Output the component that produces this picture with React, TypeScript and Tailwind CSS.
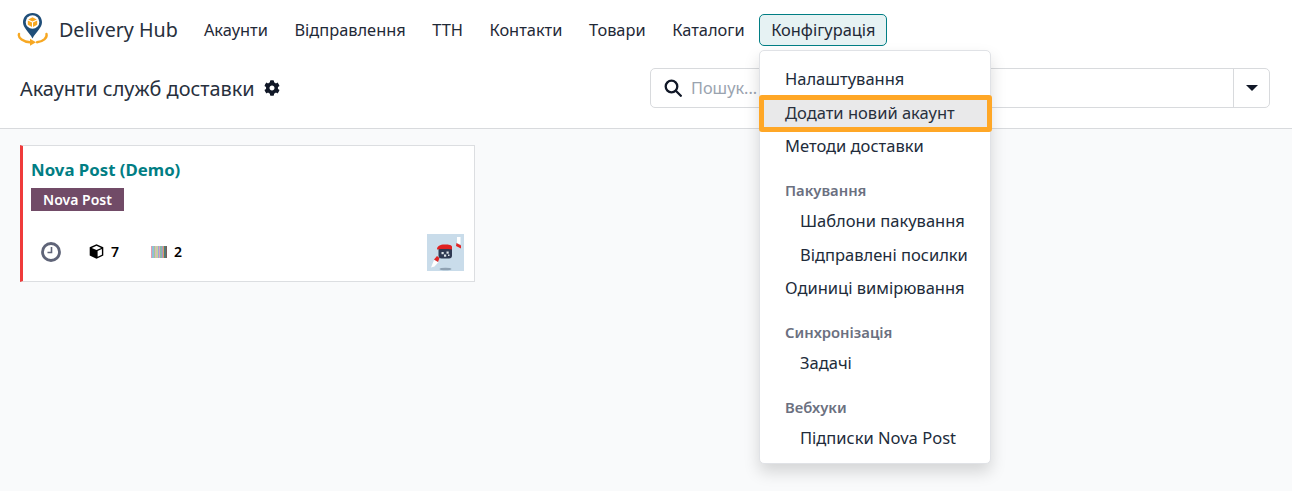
import React from 'react';
import { FaCog } from 'react-icons/fa';

const font = { fontFamily: '"Noto Sans", "Open Sans", sans-serif' };

const navItems = ['Акаунти', 'Відправлення', 'ТТН', 'Контакти', 'Товари', 'Каталоги'];

const Logo = () => (
  <svg width="32" height="36" viewBox="0 0 32 36" className="shrink-0">
    <path d="M15.500 1C9.800 1 6 5.200 6 10.300 6 15.800 12 20 15.500 26.500 19 20 25 15.800 25 10.300 25 5.200 21.200 1 15.500 1Z" fill="#1f4e79" />
    <circle cx="15.500" cy="10" r="6.800" fill="#fff" />
    <path d="M15.500 5.200l4.300 2.200-4.300 2.200-4.300-2.200Z" fill="#f7a823" />
    <path d="M10.800 8.400l4.200 2.100v4.500l-4.200-2.200Z" fill="#f7a823" />
    <path d="M20.200 8.400L16 10.500v4.500l4.200-2.200Z" fill="#f7a823" />
    <path d="M2 22c-1.200 4 4.500 7.800 11 8.200" fill="none" stroke="#f7a823" strokeWidth="2.400" strokeLinecap="round" />
    <path d="M29.500 22c1 4-3.500 7.600-9.500 8.200" fill="none" stroke="#f7a823" strokeWidth="2.400" strokeLinecap="round" />
    <path d="M13 26.700l6 3.500-6 3.500Z" fill="#f7a823" />
  </svg>
);

const Thumb = () => (
  <svg width="37" height="37" viewBox="0 0 37 37" className="block">
    <rect width="37" height="37" fill="#c9dcea" />
    <ellipse cx="18.500" cy="35" rx="6" ry="1.300" fill="#8fa2b3" />
    <path d="M7 26l4.500 2-4 4.500-3.500 1Z" fill="#fff" />
    <path d="M7 25.500l3-3.500 2.500 2-1.500 4Z" fill="#e02525" />
    <path d="M30 3h3.500v7l-3.500-.5Z" fill="#fff" />
    <path d="M29.500 9l4.500 2.500v3L29 12Z" fill="#e02525" />
    <rect x="11.500" y="12" width="13.500" height="12.500" rx="3" fill="#2f3a52" />
    <path d="M10 15.500c0-3.500 3-5 7.500-5s7.500.5 7.500 2.500v2.500c-5-.7-10-.5-15 0Z" fill="#e02020" />
    <rect x="14.500" y="18" width="2.200" height="2.200" fill="#dfe5ea" />
    <rect x="19.500" y="17.500" width="2.200" height="2.200" fill="#dfe5ea" />
    <rect x="17" y="20.500" width="2.200" height="2.200" fill="#dfe5ea" />
    <rect x="21" y="20.500" width="1.500" height="1.500" fill="#dfe5ea" />
  </svg>
);

const Cube = () => (
  <svg width="15" height="15" viewBox="0 0 15 15">
    <path d="M7.500.3l6.800 3v8.300l-6.800 3.200L.7 11.600V3.300Z" fill="#000" />
    <path d="M7.500 1.800l4.700 2.100-4.700 2-4.700-2Z" fill="#fff" />
    <path d="M8.600 7l4.300-1.900v5.600l-4.300 2.100Z" fill="#fff" />
  </svg>
);

const Barcode = () => {
  const colors = ['#e39ab0', '#8fc0d8', '#a9c88e', '#d8b0c8', '#c7d0a0', '#9aa8d8', '#e0a8b0', '#88b8a8', '#b090c8', '#d8a060', '#4f7a78', '#7a5a58'];
  return (
    <div className="flex h-3 w-4">
      {colors.map((c, i) => (
        <span key={i} className="h-full flex-1" style={{ backgroundColor: c }} />
      ))}
    </div>
  );
};

const MenuItem = ({ label, indent }: { label: string; indent?: boolean }) => (
  <div className={`h-[33.500px] leading-[33.500px] text-[16.500px] text-[#212b3a] whitespace-nowrap ${indent ? 'pl-10' : 'pl-[25px]'}`}>{label}</div>
);

const MenuHeader = ({ label }: { label: string }) => (
  <div className="mt-[11.300px] h-[30px] pl-[25px] pt-[4px] text-[14.800px] leading-[24px] font-semibold text-[#6b7080]">{label}</div>
);

export default function App() {
  return (
    <div className="relative h-[491px] w-[1292px] overflow-hidden bg-[#f9fafb] text-[#1f2937]" style={font}>
      <header className="h-[129px] border-b border-[#d8dadd] bg-white">
        <nav className="flex h-[60px] items-center pl-[17px]">
          <Logo />
          <span className="ml-[10px] mr-[14px] text-[19.700px] text-[#28303d]">Delivery Hub</span>
          <div className="flex items-center gap-[2.500px]">
            {navItems.map((item) => (
              <span key={item} className="px-3 py-1 text-[16.400px] text-[#1f2937]">{item}</span>
            ))}
            <span className="rounded-[5px] border border-[#017e84] bg-[#e6f2f3] px-[11px] py-[3px] text-[16.400px] text-[#1f2937]">Конфігурація</span>
          </div>
        </nav>
        <div className="flex h-[40px] items-center justify-between pl-5 pr-[22px] mt-[8px]">
          <div className="flex items-center gap-[9px]">
            <span className="pt-[2px] text-[19.900px] text-[#28303d]">Акаунти служб доставки</span>
            <FaCog size={16} color="#111827" />
          </div>
          <div className="flex h-[40px] w-[620px] rounded-[5px] border border-[#d8dadd] bg-white">
            <div className="flex flex-1 items-center gap-[9px] pl-[13px]">
              <svg width="18" height="18" viewBox="0 0 18 18" fill="none" stroke="#111827" strokeWidth="2.300">
                <circle cx="7.500" cy="7.500" r="5.800" />
                <path d="M11.800 11.800l5 5" strokeLinecap="round" />
              </svg>
              <span className="text-[16.300px] text-[#9aa3af]">Пошук...</span>
            </div>
            <div className="flex w-[36px] items-center justify-center border-l border-[#d8dadd]">
              <span className="h-0 w-0 border-x-[6px] border-t-[6px] border-x-transparent border-t-[#111827]" />
            </div>
          </div>
        </div>
      </header>

      <main className="p-4 pl-5">
        <div className="flex h-[137px] w-[455px] flex-col border border-[#dcdee1] border-l-[3px] border-l-[#ef3b3b] bg-white pl-2 pr-[10px]">
          <div className="mt-[10px] text-[16.800px] leading-[28px] font-bold text-[#017e84]">Nova Post (Demo)</div>
          <div className="mt-[4px] h-[23px] w-[93px] bg-[#714b67] text-center text-[14px] leading-[23px] font-semibold text-white">Nova Post</div>
          <div className="mt-auto mb-[10px] flex items-end justify-between">
            <div className="mb-[9px] flex items-center pl-[10px] text-[14px] font-semibold text-black">
              <svg width="20" height="20" viewBox="0 0 20 20" fill="none">
                <circle cx="10" cy="10" r="8.500" stroke="#5f6478" strokeWidth="2.800" />
                <path d="M10.500 5v5.500H6.500" stroke="#5f6478" strokeWidth="1.600" />
              </svg>
              <span className="ml-[28px]"><Cube /></span>
              <span className="ml-[7px]">7</span>
              <span className="ml-[32px]"><Barcode /></span>
              <span className="ml-[7px]">2</span>
            </div>
            <Thumb />
          </div>
        </div>
      </main>

      {/* dropdown */}
      <div className="absolute left-[759px] top-[50px] h-[414px] w-[232px] rounded-[5px] border border-[#e0e2e6] bg-white pt-[11px] shadow-[0_8px_16px_rgba(0,0,0,0.15)]">
        <MenuItem label="Налаштування" />
        <div className="mx-[-1px] mt-[-0.500px] mb-[-2.750px] h-[37px] w-[233px] rounded-[3px] border-[5px] border-[#ffa726] bg-[#e9e9ea] pl-[21px] text-[16.500px] leading-[25px] text-[#28303d] whitespace-nowrap">Додати новий акаунт</div>
        <MenuItem label="Методи доставки" />
        <MenuHeader label="Пакування" />
        <MenuItem label="Шаблони пакування" indent />
        <MenuItem label="Відправлені посилки" indent />
        <MenuItem label="Одиниці вимірювання" />
        <MenuHeader label="Синхронізація" />
        <MenuItem label="Задачі" indent />
        <MenuHeader label="Вебхуки" />
        <MenuItem label="Підписки Nova Post" indent />
      </div>
    </div>
  );
}
